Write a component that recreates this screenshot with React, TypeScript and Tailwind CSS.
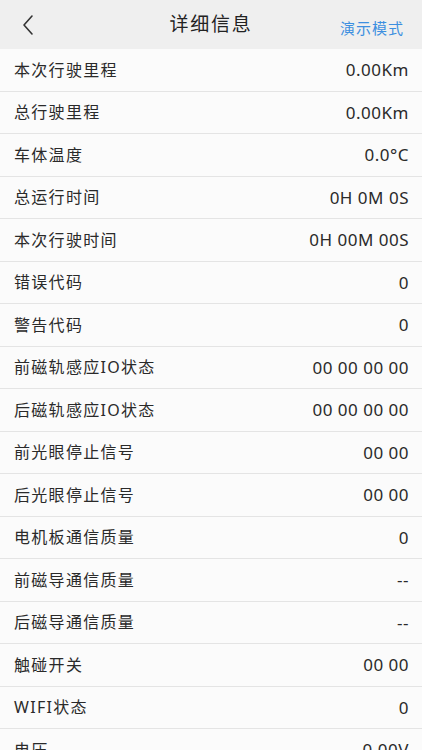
import React from 'react';

const rows: [string, string][] = [
    ['本次行驶里程', '0.00Km'],
    ['总行驶里程', '0.00Km'],
    ['车体温度', '0.0°C'],
    ['总运行时间', '0H 0M 0S'],
    ['本次行驶时间', '0H 00M 00S'],
    ['错误代码', '0'],
    ['警告代码', '0'],
    ['前磁轨感应IO状态', '00 00 00 00'],
    ['后磁轨感应IO状态', '00 00 00 00'],
    ['前光眼停止信号', '00 00'],
    ['后光眼停止信号', '00 00'],
    ['电机板通信质量', '0'],
    ['前磁导通信质量', '--'],
    ['后磁导通信质量', '--'],
    ['触碰开关', '00 00'],
    ['WIFI状态', '0'],
    ['电压', '0.00V'],
];

const App: React.FC = () => {
    return (
        <div className="w-[422px] h-[750px] overflow-hidden bg-[#fbfbfb] font-['Noto_Sans','Noto_Sans_CJK_SC',sans-serif]">
            <header className="h-[49px] bg-[#efefef] flex items-center relative">
                <button className="absolute left-[18px] top-[13px] w-[20px] h-[24px] flex items-center justify-center">
                    <svg width="14" height="22" viewBox="0 0 14 22" fill="none">
                        <path d="M11 2L3 11l8 9" stroke="#333" strokeWidth="1.6" strokeLinecap="round" strokeLinejoin="round" />
                    </svg>
                </button>
                <h1 className="flex-1 text-center text-[19px] text-[#222] tracking-[1.8px] leading-none">详细信息</h1>
                <span className="absolute right-[18px] top-[21px] text-[15px] text-[#3d8fe0] tracking-[1px] leading-none">演示模式</span>
            </header>
            <ul>
                {rows.map(([label, value], i) => (
                    <li key={i} className="h-[42.5px] flex items-center justify-between px-[14px] border-b-[1.5px] border-[#e4e4e4]">
                        <span className="text-[16px] text-[#2a2a2a] tracking-[1.3px]">{label}</span>
                        <span className="text-[17px] text-[#2a2a2a] tracking-[0.5px] -mr-[1px]">{value}</span>
                    </li>
                ))}
            </ul>
        </div>
    );
};

export default App;
